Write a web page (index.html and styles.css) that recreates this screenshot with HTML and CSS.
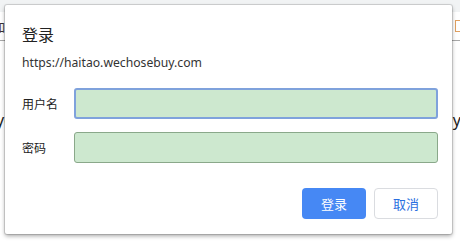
FILE: index.html
```html
<!DOCTYPE html>
<html>
<head>
<meta charset="utf-8">
<link rel="stylesheet" href="styles.css">
</head>
<body>
<div class="page">
  <div class="topstrip"></div>
  <div class="header">
    <span class="hdr-left">加</span>
    <span class="hdr-right"></span>
  </div>
  <div class="bgline"><span class="bg-left">yo</span><span class="bg-right">y</span></div>
</div>
<div class="dialog">
  <div class="title">登录</div>
  <div class="url">https://haitao.wechosebuy.com</div>
  <div class="form">
    <div class="row">
      <label class="label">用户名</label>
      <div class="input focused"></div>
    </div>
    <div class="row">
      <label class="label">密码</label>
      <div class="input"></div>
    </div>
  </div>
  <div class="actions">
    <button class="btn primary">登录</button>
    <button class="btn secondary">取消</button>
  </div>
</div>
</body>
</html>
```

FILE: styles.css
```css
html, body {
  margin: 0;
  padding: 0;
  width: 460px;
  height: 242px;
  overflow: hidden;
  background: #ffffff;
  font-family: "Noto Sans", "Noto Sans CJK SC", sans-serif;
}
.page {
  width: 460px;
  height: 242px;
}
.topstrip {
  height: 12px;
  background: #f1f3f4;
}
.header {
  height: 28px;
  border-bottom: 1px solid #a8a8a8;
  display: flex;
  justify-content: space-between;
  align-items: center;
  font-size: 12px;
  font-family: "Noto Sans CJK SC", sans-serif;
}
.hdr-left {
  margin-left: -7px;
  color: #333;
}
.hdr-right {
  width: 6px;
  height: 10px;
  border: 1px solid #e0a060;
  border-right: none;
  margin-right: -2px;
}
.bgline {
  margin-top: 68px;
  display: flex;
  justify-content: space-between;
  font-size: 16px;
  color: #222;
}
.bg-left { margin-left: -4px; }
.bg-right { margin-right: -1px; }

.dialog {
  position: absolute;
  left: 5px;
  top: 5px;
  width: 447px;
  height: 229px;
  box-sizing: border-box;
  background: #fff;
  border-radius: 2px;
  box-shadow: 0 0 0 1px rgba(0,0,0,0.12), 0 2px 4px rgba(0,0,0,0.35);
  padding: 19px 14px 15px 17px;
  display: flex;
  flex-direction: column;
}
.title {
  font-family: "Noto Sans CJK SC", sans-serif;
  font-size: 16px;
  line-height: 20px;
  color: #222;
}
.url {
  margin-top: 10px;
  font-size: 12.2px;
  line-height: 18px;
  color: #333;
}
.form {
  margin-top: 16px;
  display: flex;
  flex-direction: column;
  gap: 13px;
}
.row {
  display: flex;
  align-items: center;
}
.label {
  width: 52px;
  font-family: "Noto Sans CJK SC", sans-serif;
  font-size: 12px;
  color: #222;
}
.input {
  flex: 1;
  height: 31px;
  box-sizing: border-box;
  background: #cde8cf;
  border: 1px solid #8aa88a;
  border-radius: 3px;
}
.input.focused {
  border: 2px solid #7fa2dc;
}
.actions {
  margin-top: auto;
  display: flex;
  justify-content: flex-end;
  gap: 8px;
}
.btn {
  width: 64px;
  height: 31px;
  box-sizing: border-box;
  border-radius: 4px;
  font-family: "Noto Sans CJK SC", sans-serif;
  font-size: 13px;
  padding: 0;
  cursor: pointer;
}
.btn.primary {
  background: #4688f4;
  border: none;
  color: #fff;
}
.btn.secondary {
  background: #fff;
  border: 1px solid #dadce0;
  color: #2a6fe0;
}
```
